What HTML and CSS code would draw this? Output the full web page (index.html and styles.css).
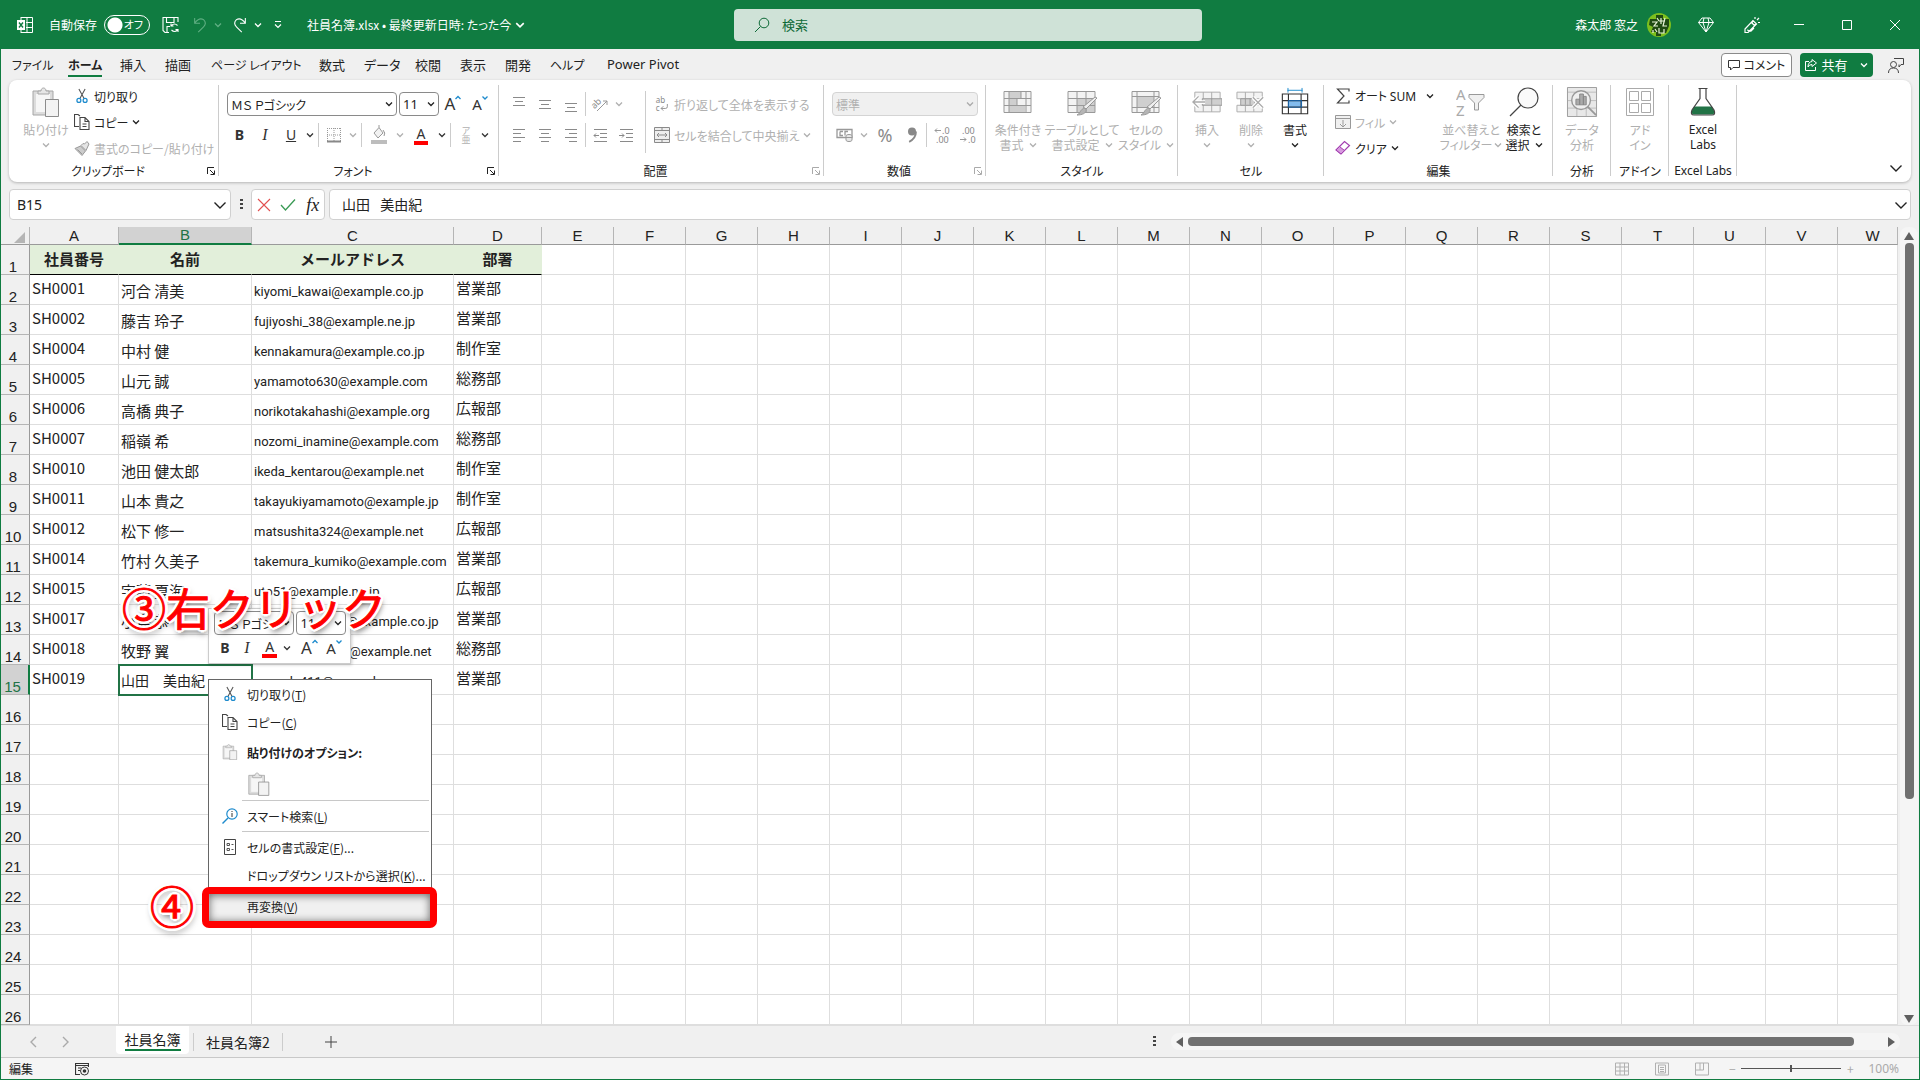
FILE: index.html
```html
<!DOCTYPE html>
<html lang="ja">
<head>
<meta charset="utf-8">
<title>社員名簿.xlsx</title>
<link rel="stylesheet" href="styles.css">
</head>
<body>
<svg class="sprite" aria-hidden="true">
  <symbol id="chev" viewBox="0 0 8 8"><path d="M1 2.500 4 5.500 7 2.500" fill="none" stroke="currentColor" stroke-width="1.300"/></symbol>
  <symbol id="chev-l" viewBox="0 0 14 14"><path d="M1.500 4.500 7 10l5.500-5.500" fill="none" stroke="currentColor" stroke-width="1.400"/></symbol>
  <symbol id="mark-up" viewBox="0 0 6 6"><path d="M.5 4 3 1.500 5.500 4" fill="none" stroke="#1e8bcd" stroke-width="1.300"/></symbol>
  <symbol id="mark-down" viewBox="0 0 6 6"><path d="M.5 1.500 3 4l2.500-2.500" fill="none" stroke="#1e8bcd" stroke-width="1.300"/></symbol>
  <symbol id="launch" viewBox="0 0 8 8"><path d="M.5 7V.5H7M3 3l4 4M7.500 3.500v4h-4" fill="none" stroke="currentColor"/></symbol>
  <symbol id="scissors" viewBox="0 0 16 18"><path d="M4.500 1 10.500 12M11.500 1 5.500 12" fill="none" stroke="#555" stroke-width="1.200"/><circle cx="4.500" cy="14" r="2.200" fill="none" stroke="#1e8bcd" stroke-width="1.400"/><circle cx="11.500" cy="14" r="2.200" fill="none" stroke="#1e8bcd" stroke-width="1.400"/></symbol>
  <symbol id="copy" viewBox="0 0 16 16"><path d="M5 12.500H.5v-12H4l2 1.500M6 3.500h5l4 4v8H6zM11 3.500v4h4M8.500 10h4M8.500 12.500h4" fill="none" stroke="#444" stroke-width="1.100"/></symbol>
  <symbol id="brush" viewBox="0 0 16 16"><path d="M1 8.500 6.500 6l5 5L8 15.500z" fill="#ccc" stroke="#999"/><path d="M3.500 9.500 8 14M7 5.500 12 10.500 15 4 13 1.500 10.500 4 9 3.500z" fill="#e5e5e5" stroke="#999"/></symbol>
  <symbol id="paste" viewBox="0 0 28 30"><path d="M1 4h20v24H1z" fill="#dcdcdc" stroke="#a6a6a6"/><path d="M4 7h14v18H4z" fill="#f6f6f6"/><path d="M6 7V4h3c0-4 5-4 5 0h3v3z" fill="#e6e6e6" stroke="#a6a6a6"/><path d="M13.500 12.500h13v17h-13z" fill="#f3f3f3" stroke="#8c8c8c"/></symbol>
  <symbol id="al-l" viewBox="0 0 14 16"><path d="M1 2.500h12M1 6.500h8M1 10.500h12M1 14.500h8" stroke="#8a8a8a"/></symbol>
  <symbol id="al-c" viewBox="0 0 14 16"><path d="M1 2.500h12M3 6.500h8M1 10.500h12M3 14.500h8" stroke="#8a8a8a"/></symbol>
  <symbol id="al-r" viewBox="0 0 14 16"><path d="M1 2.500h12M5 6.500h8M1 10.500h12M5 14.500h8" stroke="#8a8a8a"/></symbol>
  <symbol id="al-t" viewBox="0 0 14 16"><path d="M1 1.500h12M3 5.500h8M1 9.500h12" stroke="#8a8a8a"/></symbol>
  <symbol id="al-m" viewBox="0 0 14 16"><path d="M1 4.500h12M3 8.500h8M1 12.500h12" stroke="#8a8a8a"/></symbol>
  <symbol id="al-b" viewBox="0 0 14 16"><path d="M1 7.500h12M3 11.500h8M1 15.500h12" stroke="#8a8a8a"/></symbol>
  <symbol id="ind-l" viewBox="0 0 14 16"><path d="M1 2.500h13M7 6.500h7M7 10.500h7M1 14.500h13M6 8.500H1M3 6.500l-2 2 2 2" fill="none" stroke="#8a8a8a"/></symbol>
  <symbol id="ind-r" viewBox="0 0 14 16"><path d="M1 2.500h13M7 6.500h7M7 10.500h7M1 14.500h13M0 8.500h5M3 6.500l2 2-2 2" fill="none" stroke="#8a8a8a"/></symbol>
  <symbol id="merge" viewBox="0 0 16 16"><path d="M.5.500h15v15H.5zM.5 3.500h15M.5 12.500h15M8 .5v3M8 12.500v3M3 8h10M5 6 3 8l2 2M11 6l2 2-2 2" fill="#eee" stroke="#8a8a8a"/></symbol>
  <symbol id="border" viewBox="0 0 16 16"><path d="M1 1.500h14M1 8h14M1.500 1v13M8 1v13M14.500 1v13" stroke="#999" stroke-dasharray="1 1"/><path d="M1 14.500h14" stroke="#888" stroke-width="2"/></symbol>
  <symbol id="fill" viewBox="0 0 16 20"><path d="M3 8 8 2.500 12 8l-5 5zM8 2.500V0M12 5q3 3 1 6" fill="#f2f2f2" stroke="#999"/><path d="M0 15h16v4H0z" fill="#bdbdbd"/></symbol>
  <symbol id="acc" viewBox="0 0 18 14"><path d="M1 1.500h15v8H1zM4 3.500h3M4 3.500v4h3M9 7.500v-4h3" fill="none" stroke="#999" stroke-width="1.300"/><path d="M10 8c0-2 6-2 6 0v4c0 2-6 2-6 0zM10 9.500h6" fill="#e8e8e8" stroke="#999"/></symbol>
  <symbol id="comma" viewBox="0 0 10 14"><circle cx="5" cy="4" r="3.500" fill="#888"/><path d="M8.500 4q0 6-6 9" fill="none" stroke="#888" stroke-width="1.600"/></symbol>
  <symbol id="cond" viewBox="0 0 30 28"><path d="M1 3.500h27v21H1z" fill="#f3f3f3"/><path d="M6 4h12v6H6zM6 11h8v6H6zM6 18h16v6H6z" fill="#cfcfcf"/><path d="M1 3.500h27v21H1zM6 3.500v21M23 3.500v21M1 10.500h27M1 17.500h27M18 4v6M14 11v6" fill="none" stroke="#999"/></symbol>
  <symbol id="tblfmt" viewBox="0 0 30 28"><path d="M1 3.500h27v21H1z" fill="#f3f3f3"/><path d="M10 10.500h18v14H10z" fill="#cfcfcf"/><path d="M1 3.500h27v21H1zM10 3.500v21M19 3.500v21M1 10.500h27M1 17.500h27" fill="none" stroke="#999"/><path d="M30 10 19 21l-3-2L28 9z" fill="#eee" stroke="#999"/><path d="M18 20c3 3 0 7-8 7 4-2 3-6 8-7z" fill="#b5b5b5" stroke="#999"/></symbol>
  <symbol id="cellsty" viewBox="0 0 30 28"><path d="M1 3.500h27v21H1z" fill="#f3f3f3"/><path d="M6 8.500h17v11H6z" fill="#cfcfcf"/><path d="M1 3.500h27v21H1zM6 3.500v21M23 3.500v21M1 8.500h27M1 19.500h27" fill="none" stroke="#999"/><path d="M30 10 19 21l-3-2L28 9z" fill="#eee" stroke="#999"/><path d="M18 20c3 3 0 7-8 7 4-2 3-6 8-7z" fill="#b5b5b5" stroke="#999"/></symbol>
  <symbol id="ins" viewBox="0 0 32 28"><path d="M3 3.500h27v21H3zM12 3.500v21M21 3.500v21" fill="#f3f3f3" stroke="#aaa"/><path d="M11 10.500h21v7H11zM21 10v7" fill="#cfcfcf" stroke="#999"/><path d="M14 14H1M7 8l-6 6 6 6" fill="none" stroke="#fff" stroke-width="4"/><path d="M14 14H1M7 8l-6 6 6 6" fill="none" stroke="#aaa" stroke-width="1.500"/></symbol>
  <symbol id="del" viewBox="0 0 32 28"><path d="M1 3.500h27v7H1zM1 17.500h27v7H1zM10 3.500v7M19 3.500v7M10 17.500v7M19 17.500v7" fill="#f3f3f3" stroke="#aaa"/><path d="M5 10.500h15v7H5zM10 10v7M15 10v7" fill="#cfcfcf" stroke="#999"/><path d="m18 9 11 11M29 9 18 20" stroke="#fff" stroke-width="4"/><path d="m18 9 11 11M29 9 18 20" stroke="#aaa" stroke-width="1.500"/></symbol>
  <symbol id="fmt" viewBox="0 0 30 32"><path d="M1.500 7.500h27v21h-27z" fill="#fff"/><path d="M8 14h14v7H8z" fill="#83bcee"/><path d="M1.500 7.500h27v21h-27zM8 7.500v21M21.500 7.500v21M1 14.500h27M1 21.500h27" fill="none" stroke="#333" stroke-width="1.200"/><path d="M8 14.500h14v7H8z" fill="none" stroke="#1565b0"/><path d="M7.500 1v5M22.500 1v5M7 3.500h16" stroke="#1e8bcd"/></symbol>
  <symbol id="sum" viewBox="0 0 14 16"><path d="M13 3.500V1H1.500L8 8l-6.500 7H13v-2.500" fill="none" stroke="#444" stroke-width="1.200"/></symbol>
  <symbol id="down" viewBox="0 0 16 16"><path d="M.5 1.500h15v13H.5zM.5 4.500h15M8 6v7M5 10l3 3 3-3" fill="#f0f0f0" stroke="#999"/></symbol>
  <symbol id="eraser" viewBox="0 0 16 16"><path d="M1 10 9.500 1.500l5 4L6 14z" fill="#fff" stroke="#a33fb0" stroke-width="1.200"/><path d="M1 10 4.500 6.500 9.500 10.500 6 14z" fill="#d79ade" stroke="#a33fb0"/></symbol>
  <symbol id="find" viewBox="0 0 30 30"><circle cx="19" cy="11" r="10" fill="#fafafa" stroke="#444" stroke-width="1.200"/><path d="M12 18 1 29" stroke="#444" stroke-width="1.300"/></symbol>
  <symbol id="anal" viewBox="0 0 32 32"><path d="M.5.500h31v31H.5z" fill="#e8e8e8" stroke="#999"/><path d="M1 5.500h30M1 14.500h30M1 22.500h30M10.500 23v8M20.500 23v8" stroke="#bbb"/><circle cx="15" cy="14" r="10" fill="#eee" stroke="#999" stroke-width="1.500"/><path d="M9.500 13h4v6h-4zM13.500 7.500h4V19h-4zM17.500 10h3v9h-3z" fill="#aaa" stroke="#888"/><path d="m22 21 9 9" stroke="#999" stroke-width="2"/></symbol>
  <symbol id="addin" viewBox="0 0 28 28"><path d="M.5.500h27v27H.5zM3.500 3.500h9v9h-9zM15.500 3.500h9v9h-9zM3.500 15.500h9v9h-9zM15.500 15.500h9v9h-9z" fill="#fff" stroke="#aaa"/></symbol>
  <symbol id="flask" viewBox="0 0 26 30"><path d="M10 1.500v10L3 22q-3 6 1 6h18q4 0 1-6l-7-10.500v-10z" fill="#fff"/><path d="M4 19.500h18l2 4q1 4-2 4H4q-3 0-2-4z" fill="#217346"/><path d="M8.500 1.500h9M10 1.500v10L2 23q-2 5 2 5h18q4 0 2-5l-8-11.500v-10" fill="none" stroke="#444" stroke-width="1.200"/></symbol>
  <symbol id="lens" viewBox="0 0 16 16"><circle cx="10" cy="6" r="4.800" fill="none" stroke="currentColor"/><path d="M6.500 9.500 1 15" stroke="currentColor"/></symbol>
  <symbol id="info-lens" viewBox="0 0 16 16"><circle cx="10" cy="6" r="5.200" fill="none" stroke="#1e8bcd" stroke-width="1.200"/><path d="M6 10 .5 15.500" stroke="#1e8bcd" stroke-width="1.400"/><path d="M10 5v4M10 3v1" stroke="#333"/></symbol>
  <symbol id="cellfmt" viewBox="0 0 16 16"><path d="M2.500.500h11v15h-11z" fill="#fff" stroke="#444"/><path d="M5 4.500h2.500v2H5zM5 9.500h2.500v2H5zM9.500 5.500h2M9.500 10.500h2" fill="none" stroke="#555"/></symbol>
</svg>

<div class="app">
  <header class="titlebar">
    <div class="tb-left">
      <svg class="i16 xl" viewBox="0 0 16 16"><path d="M4 .5h11.500v15H4M4 3V0M4 16v-3M10 .5v15M9 5.500h6.500M9 10.500h6.500" fill="none" stroke="#fff"/><path d="M0 3h8v10H0z" fill="#fff"/><path d="m2 5.500 4 5M6 5.500l-4 5" stroke="#107c41" stroke-width="1.400"/></svg>
      <label class="autosave"><span>自動保存</span><input type="checkbox" class="switch"><span class="switch-txt">オフ</span></label>
      <button class="qb q-save" aria-label="保存"><svg class="i18" viewBox="0 0 18 18"><path d="M7 16.500H3l-2-2v-13h15V6M4.500 1.500v5H12v-5M5 16.500v-6h3M15.500 9.500q-3-3-6 0M9 7.500v2.500h2.500M9.500 14q3 3 6 0M16 16v-2.500h-2.500" fill="none" stroke="#fff" stroke-width="1.100"/></svg></button>
      <button class="qb q-undo dim" aria-label="元に戻す"><svg class="i16" viewBox="0 0 16 18"><path d="M2 1v6h6M2 7q5-7 10-4 4 4 0 8l-6 6" fill="none" stroke="currentColor" stroke-width="1.200"/></svg><svg class="i8"><use href="#chev"/></svg></button>
      <button class="qb q-redo" aria-label="やり直し"><svg class="i16" viewBox="0 0 16 18"><path d="M14 1v6H8M14 7Q9 0 4 3q-4 4 0 8l6 6" fill="none" stroke="currentColor" stroke-width="1.200"/></svg><svg class="i8"><use href="#chev"/></svg></button>
      <button class="qb q-more" aria-label="カスタマイズ"><svg class="i8" viewBox="0 0 8 8"><path d="M1 .5h6M1 3.500l3 3 3-3" fill="none" stroke="#fff" stroke-width="1.200"/></svg></button>
      <button class="doc-name">社員名簿.xlsx • 最終更新日時: たった今<svg class="i10"><use href="#chev"/></svg></button>
    </div>
    <label class="search"><svg class="i16"><use href="#lens"/></svg><input type="text" placeholder="検索" aria-label="検索"></label>
    <div class="tb-right">
      <span class="user">森太郎 窓之</span>
      <svg class="avatar" viewBox="0 0 24 24"><circle cx="12" cy="12" r="12" fill="#7cbf1e"/><path d="M3 6h6V2h7v4h6v7l-3 7h-5v3H9v-4H4l2-5-4-2z" fill="#1f4a12"/><path d="M5 9h5l-3 4h4M10 5l2 3M14 5v6M12 8h6M18 5l-2 8h4M8 16l2 3M12 15v5h5v-4M6 20v-3" fill="none" stroke="#e8f3d8" stroke-width="1.200"/></svg>
      <svg class="i16" viewBox="0 0 16 16"><path d="M4 1h8l3.500 4.500L8 15 .5 5.500zM.5 5.500h15M5 5.500 8 15l3-9.500M5 5.500 6 1M11 5.500 10 1" fill="none" stroke="#fff"/></svg>
      <svg class="i16" viewBox="0 0 16 16"><path d="M1 12 9 3.500l3.500 3.500L4 15.500H1zM9 3.500 8 6l2 2 2.500-1M3 13l4 1 3-3M11 2V0M13 3l2-2M14 5.500h2" fill="none" stroke="#fff" stroke-width="1.200"/></svg>
      <button class="win" aria-label="最小化"><svg viewBox="0 0 10 10"><path d="M0 4.500h10" stroke="#fff"/></svg></button>
      <button class="win" aria-label="最大化"><svg viewBox="0 0 10 10"><path d="M.5.500h9v9h-9z" fill="none" stroke="#fff"/></svg></button>
      <button class="win" aria-label="閉じる"><svg viewBox="0 0 10 10"><path d="m0 0 10 10M10 0 0 10" stroke="#fff"/></svg></button>
    </div>
  </header>

  <nav class="tabs">
    <div class="tablist">
      <button>ファイル</button><button class="on">ホーム</button><button>挿入</button><button>描画</button><button>ページ レイアウト</button><button>数式</button><button>データ</button><button>校閲</button><button>表示</button><button>開発</button><button>ヘルプ</button><button class="lat">Power Pivot</button>
    </div>
    <div class="tabs-right">
      <button class="comment"><svg class="i12" viewBox="0 0 12 12"><path d="M.5 1.500h11v7H5L2.500 11V8.500h-2z" fill="none" stroke="#333"/></svg>コメント</button>
      <button class="share"><svg class="i12" viewBox="0 0 12 12"><path d="M4 2.500H.5v9h10V8M7 .5l4.500 3.500L7 7.500V5.500Q4 5.500 3 8q0-5 4-5.500z" fill="none" stroke="#fff"/></svg>共有<svg class="i8"><use href="#chev"/></svg></button>
      <svg class="i16" viewBox="0 0 16 16"><path d="M6 1.500h9.500v6H13L11 10V7.500" fill="none" stroke="#444"/><circle cx="5.500" cy="7.500" r="3" fill="none" stroke="#444"/><path d="M.5 16q0-5 5-5t5 5" fill="none" stroke="#444"/></svg>
    </div>
  </nav>

  <section class="ribbon">
    <div class="group g-clip">
      <div class="gbody">
        <button class="big dim w-paste"><svg class="i28"><use href="#paste"/></svg><span>貼り付け</span><svg class="i8"><use href="#chev"/></svg></button>
        <div class="rows3">
          <button class="small"><svg class="i16"><use href="#scissors"/></svg>切り取り</button>
          <button class="small"><svg class="i16"><use href="#copy"/></svg>コピー<svg class="i8"><use href="#chev"/></svg></button>
          <button class="small dim"><svg class="i16"><use href="#brush"/></svg>書式のコピー/貼り付け</button>
        </div>
      </div>
      <div class="gfoot"><span>クリップボード</span><svg class="i8"><use href="#launch"/></svg></div>
    </div>
    <div class="group g-font">
      <div class="gbody rows2">
        <div class="row">
          <span class="combo c-font"><select aria-label="フォント名"><option>ＭＳ Ｐゴシック</option></select><svg class="i8"><use href="#chev"/></svg></span>
          <span class="combo c-size"><select aria-label="サイズ"><option>11</option></select><svg class="i8"><use href="#chev"/></svg></span>
          <button class="tool t-grow">A<svg class="mark"><use href="#mark-up"/></svg></button><button class="tool t-shrink">A<svg class="mark"><use href="#mark-down"/></svg></button>
        </div>
        <div class="row">
          <button class="tool w26"><b>B</b></button><button class="tool w26"><i class="it">I</i></button><button class="tool w26"><u>U</u></button><button class="tool w12"><svg class="i8"><use href="#chev"/></svg></button>
          <span class="vsep"></span>
          <button class="tool w26 dim"><svg class="i16"><use href="#border"/></svg></button><button class="tool w12 dim"><svg class="i8"><use href="#chev"/></svg></button>
          <span class="vsep"></span>
          <button class="tool w30 dim"><svg class="i16x20"><use href="#fill"/></svg></button><button class="tool w12 dim"><svg class="i8"><use href="#chev"/></svg></button>
          <button class="tool w30"><span class="fcolor">A</span></button><button class="tool w12"><svg class="i8"><use href="#chev"/></svg></button>
          <span class="vsep"></span>
          <button class="tool w26 dim ruby"><span>ア</span><span>亜</span></button><button class="tool w12"><svg class="i8"><use href="#chev"/></svg></button>
        </div>
      </div>
      <div class="gfoot"><span>フォント</span><svg class="i8"><use href="#launch"/></svg></div>
    </div>
    <div class="group g-align">
      <div class="gbody acols">
        <div class="rows2">
          <div class="row">
            <button class="tool w26"><svg class="i14"><use href="#al-t"/></svg></button><button class="tool w26"><svg class="i14"><use href="#al-m"/></svg></button><button class="tool w26"><svg class="i14"><use href="#al-b"/></svg></button><span class="vsep"></span><button class="tool w26 dim"><svg class="i18" viewBox="0 0 18 18"><g transform="rotate(-45 7 8)"><text x="0" y="10" class="glyph">ab</text></g><path d="M6 16 16 6M12 6h4v4" fill="none" stroke="#999"/></svg></button><button class="tool w12 dim"><svg class="i8"><use href="#chev"/></svg></button>
          </div>
          <div class="row">
            <button class="tool w26"><svg class="i14"><use href="#al-l"/></svg></button><button class="tool w26"><svg class="i14"><use href="#al-c"/></svg></button><button class="tool w26"><svg class="i14"><use href="#al-r"/></svg></button><span class="vsep"></span><button class="tool w26"><svg class="i14"><use href="#ind-l"/></svg></button><button class="tool w26"><svg class="i14"><use href="#ind-r"/></svg></button>
          </div>
        </div>
        <div class="rows2 wrapcol">
          <button class="small dim"><svg class="i16" viewBox="0 0 16 18"><text x="1" y="8" class="glyph">ab</text><text x="1" y="17" class="glyph">c</text><path d="M14 9v3q0 2-2 2H7M9.500 11.500 7 14l2.500 2.500" fill="none" stroke="#8a8a8a"/></svg>折り返して全体を表示する</button>
          <button class="small dim"><svg class="i16"><use href="#merge"/></svg>セルを結合して中央揃え<svg class="i8"><use href="#chev"/></svg></button>
        </div>
      </div>
      <div class="gfoot dimicon"><span>配置</span><svg class="i8"><use href="#launch"/></svg></div>
    </div>
    <div class="group g-num">
      <div class="gbody rows2">
        <div class="row"><span class="combo c-num"><select aria-label="表示形式" disabled><option>標準</option></select><svg class="i8"><use href="#chev"/></svg></span></div>
        <div class="row">
          <button class="tool w26"><svg class="i18"><use href="#acc"/></svg></button><button class="tool w12 dim"><svg class="i8"><use href="#chev"/></svg></button>
          <button class="tool w30 pct">%</button><button class="tool w22"><svg class="i14"><use href="#comma"/></svg></button><span class="vsep"></span>
          <button class="tool w26"><svg class="i18" viewBox="0 0 18 18"><path d="M2 4.500h6M4 2.500l-2 2 2 2" fill="none" stroke="#999"/><text x="9" y="8" class="glyph">.0</text><text x="3" y="17" class="glyph">.00</text></svg></button><button class="tool w26"><svg class="i18" viewBox="0 0 18 18"><path d="M1 13.500h6M5 11.500l2 2-2 2" fill="none" stroke="#999"/><text x="3" y="8" class="glyph">.00</text><text x="9" y="17" class="glyph">.0</text></svg></button>
        </div>
      </div>
      <div class="gfoot dimicon"><span>数値</span><svg class="i8"><use href="#launch"/></svg></div>
    </div>
    <div class="group g-style">
      <div class="gbody">
        <button class="big dim w-58"><svg class="i30"><use href="#cond"/></svg><span>条件付き</span><span>書式<svg class="i8"><use href="#chev"/></svg></span></button>
        <button class="big dim w-68"><svg class="i30"><use href="#tblfmt"/></svg><span>テーブルとして</span><span>書式設定<svg class="i8"><use href="#chev"/></svg></span></button>
        <button class="big dim w-58"><svg class="i30"><use href="#cellsty"/></svg><span>セルの</span><span>スタイル<svg class="i8"><use href="#chev"/></svg></span></button>
      </div>
      <div class="gfoot plain"><span>スタイル</span></div>
    </div>
    <div class="group g-cell">
      <div class="gbody">
        <button class="big dim w-44"><svg class="i30"><use href="#ins"/></svg><span>挿入</span><svg class="i8"><use href="#chev"/></svg></button>
        <button class="big dim w-44"><svg class="i30"><use href="#del"/></svg><span>削除</span><svg class="i8"><use href="#chev"/></svg></button>
        <button class="big w-44"><svg class="i30"><use href="#fmt"/></svg><span>書式</span><svg class="i8"><use href="#chev"/></svg></button>
      </div>
      <div class="gfoot plain"><span>セル</span></div>
    </div>
    <div class="group g-edit">
      <div class="gbody">
        <div class="rows3 e3">
          <button class="small"><svg class="i16"><use href="#sum"/></svg><span>オート <span class="lat">SUM</span></span><svg class="i8 near"><use href="#chev"/></svg></button>
          <button class="small dim"><svg class="i16"><use href="#down"/></svg>フィル<svg class="i8"><use href="#chev"/></svg></button>
          <button class="small"><svg class="i16"><use href="#eraser"/></svg>クリア<svg class="i8"><use href="#chev"/></svg></button>
        </div>
        <button class="big dim w-58"><svg class="i30" viewBox="0 0 30 30"><text x="0" y="13" class="az">A</text><text x="0" y="29" class="az">Z</text><path d="M13 7.500h15v3l-5.500 5.500v7h-4v-7L13 10.500z" fill="#f0f0f0" stroke="#999"/></svg><span>並べ替えと</span><span class="tight">フィルター<svg class="i8"><use href="#chev"/></svg></span></button>
        <button class="big w-50"><svg class="i30"><use href="#find"/></svg><span>検索と</span><span>選択<svg class="i8"><use href="#chev"/></svg></span></button>
      </div>
      <div class="gfoot plain"><span>編集</span></div>
    </div>
    <div class="group g-58">
      <div class="gbody"><button class="big dim"><svg class="i32"><use href="#anal"/></svg><span>データ</span><span>分析</span></button></div>
      <div class="gfoot plain"><span>分析</span></div>
    </div>
    <div class="group g-58">
      <div class="gbody"><button class="big dim"><svg class="i28"><use href="#addin"/></svg><span>アド</span><span>イン</span></button></div>
      <div class="gfoot plain"><span>アドイン</span></div>
    </div>
    <div class="group g-68">
      <div class="gbody"><button class="big lat"><svg class="i28"><use href="#flask"/></svg><span>Excel</span><span>Labs</span></button></div>
      <div class="gfoot plain lat"><span>Excel Labs</span></div>
    </div>
    <button class="collapse" aria-label="リボンを折りたたむ"><svg class="i14"><use href="#chev-l"/></svg></button>
  </section>

  <section class="formula">
    <label class="namebox"><input type="text" value="B15" aria-label="名前ボックス"><svg class="i14"><use href="#chev-l"/></svg></label>
    <span class="dots" aria-hidden="true"></span>
    <div class="fx">
      <button aria-label="キャンセル"><svg class="i14" viewBox="0 0 14 14"><path d="m1 1 12 12M13 1 1 13" stroke="#e25050" stroke-width="1.100"/></svg></button>
      <button aria-label="入力"><svg class="i16" viewBox="0 0 16 14"><path d="m1 7 4.500 5L15 1.500" fill="none" stroke="#3a9a55" stroke-width="1.300"/></svg></button>
      <button class="fxb">fx</button>
    </div>
    <label class="fbar"><input type="text" value="山田&#8194; 美由紀" aria-label="数式バー"><svg class="i14"><use href="#chev-l"/></svg></label>
  </section>

  <main class="sheet">
    <table class="grid" id="grid">
      <colgroup id="cols"><col class="k-h"><col class="k-a"><col class="k-b"><col class="k-c"><col class="k-d"></colgroup>
      <thead><tr id="letters"><th class="corner"><svg viewBox="0 0 10 10"><path d="M10 0v10H0z" fill="#b5b5b5"/></svg></th></tr></thead>
      <tbody id="rows"></tbody>
    </table>
    <div class="vscroll"><span class="ar up"></span><span class="thumb"></span><span class="ar down"></span></div>
  </main>

  <footer class="sheetbar">
    <div class="nav"><button aria-label="前へ"><svg viewBox="0 0 8 12"><path d="M7 1 2 6l5 5" fill="none" stroke="#aaa" stroke-width="1.400"/></svg></button><button aria-label="次へ"><svg viewBox="0 0 8 12"><path d="m1 1 5 5-5 5" fill="none" stroke="#aaa" stroke-width="1.400"/></svg></button></div>
    <button class="st on"><span>社員名簿</span></button>
    <button class="st"><span>社員名簿2</span></button>
    <button class="add" aria-label="新しいシート"><svg viewBox="0 0 12 12"><path d="M6 0v12M0 6h12" stroke="#444"/></svg></button>
    <span class="dots" aria-hidden="true"></span>
    <div class="hscroll"><span class="ar left"></span><span class="thumb"></span><span class="ar right"></span></div>
  </footer>
  <footer class="status">
    <span class="mode">編集</span>
    <svg class="i14" viewBox="0 0 14 14"><path d="M5 12.500H.5v-11h13V5M.5 3.500h13M3 6h3M3 8.500h2" fill="none" stroke="#333" stroke-width="1.200"/><circle cx="9.500" cy="9" r="4" fill="#f5f5f5" stroke="#333"/><circle cx="9.500" cy="9" r="1.800" fill="#333"/></svg>
    <div class="views">
      <svg class="i14" viewBox="0 0 14 14"><path d="M.5 1h13v12H.5zM.5 5h13M.5 9h13M5 1v12M9.500 1v12" fill="none" stroke="#b0b0b0"/></svg>
      <svg class="i14" viewBox="0 0 14 14"><path d="M.5 1h13v12H.5zM3.500 3h7v8h-7zM5 5.500h4M5 7.500h4M5 9.500h4" fill="none" stroke="#b0b0b0"/></svg>
      <svg class="i14" viewBox="0 0 14 14"><path d="M.5 1h13v12H.5zM.5 8h8V1M5 1v7" fill="none" stroke="#b0b0b0"/></svg>
    </div>
    <span class="pm">−</span><input type="range" class="zoom" aria-label="ズーム" min="0" max="200" value="100" disabled><span class="pm">+</span><span class="pc">100%</span>
  </footer>

  <div class="mini">
    <div class="row">
      <span class="combo m-font"><select aria-label="フォント"><option>ＭＳ Ｐゴシ</option></select><svg class="i8"><use href="#chev"/></svg></span>
      <span class="combo m-size"><select aria-label="フォントサイズ"><option>11</option></select><svg class="i8"><use href="#chev"/></svg></span>
    </div>
    <div class="row">
      <button class="tool w22"><b>B</b></button><button class="tool w22"><i class="it">I</i></button><button class="tool w26"><span class="fcolor">A</span></button><button class="tool w12"><svg class="i8"><use href="#chev"/></svg></button><button class="tool t-grow">A<svg class="mark"><use href="#mark-up"/></svg></button><button class="tool t-shrink">A<svg class="mark"><use href="#mark-down"/></svg></button>
    </div>
  </div>

  <div class="menu" role="menu">
    <button role="menuitem"><svg class="i16"><use href="#scissors"/></svg><span>切り取り(<u>T</u>)</span></button>
    <button role="menuitem"><svg class="i16"><use href="#copy"/></svg><span>コピー(<u>C</u>)</span></button>
    <div class="mhead"><svg class="i16"><use href="#paste"/></svg><b>貼り付けのオプション:</b></div>
    <button role="menuitem" class="popt" aria-label="貼り付け"><svg class="i22"><use href="#paste"/></svg></button>
    <hr>
    <button role="menuitem"><svg class="i16"><use href="#info-lens"/></svg><span>スマート検索(<u>L</u>)</span></button>
    <hr>
    <button role="menuitem"><svg class="i16"><use href="#cellfmt"/></svg><span>セルの書式設定(<u>F</u>)...</span></button>
    <button role="menuitem"><span class="noicon">ドロップダウン リストから選択(<u>K</u>)...</span></button>
    <button role="menuitem" class="last"><span class="noicon">再変換(<u>V</u>)</span></button>
  </div>

  <div class="frame"></div>
  <div class="note n3">③右クリック</div>
  <div class="note n4">④</div>
</div>
<script src="sheet.js"></script>
</body>
</html>
```
FILE: styles.css
```css
* { box-sizing: border-box; }
body {
  margin: 0;
  font-family: "Noto Sans CJK JP", "Noto Sans", sans-serif;
  font-size: 12px;
  line-height: 15px;
  color: #222;
  font-feature-settings: "palt";
}
button, input, select { font: inherit; font-feature-settings: inherit; color: inherit; margin: 0; }
button { background: none; border: 0; padding: 0; white-space: nowrap; }
svg { flex: none; display: block; }
.sprite { position: absolute; width: 0; height: 0; }
.lat { font-family: "Noto Sans", sans-serif; }
.glyph { font: 9px "Noto Sans", sans-serif; fill: #888; }
.az { font: 15px "Noto Sans", sans-serif; fill: #aaa; }
.i8 { width: 8px; height: 8px; }
.i10 { width: 10px; height: 10px; }
.i12 { width: 12px; height: 12px; }
.i14 { width: 14px; height: 16px; }
.i16 { width: 16px; height: 16px; }
.i16x20 { width: 16px; height: 20px; }
.i18 { width: 18px; height: 18px; overflow: visible; }
.i22 { width: 22px; height: 24px; }
.i28 { width: 28px; height: 30px; }
.i30 { width: 30px; height: 30px; }
.i32 { width: 32px; height: 32px; }
.row { display: flex; align-items: center; }
.dim { color: #b0b0b0; }

.app {
  position: relative;
  display: flex;
  flex-direction: column;
  min-height: 100vh;
  background: #f0f0f0;
  border: solid #107c41;
  border-width: 0 1px 1px;
  overflow: hidden;
}

/* title bar */
.titlebar {
  display: grid;
  grid-template-columns: minmax(0, 1fr) 468px minmax(0, 1fr);
  gap: 0 16px;
  height: 49px;
  padding-left: 16px;
  background: #107c41;
  color: #fff;
  align-items: center;
}
.tb-left { display: flex; align-items: center; }
.xl { margin-right: 16px; }
.autosave { display: flex; align-items: center; position: relative; }
.switch {
  appearance: none;
  width: 46px;
  height: 20px;
  margin: 0 0 0 7px;
  border: 1px solid #fff;
  border-radius: 10px;
  background: radial-gradient(circle at 10px 9px, #fff 7px, transparent 8px);
}
.switch-txt { position: absolute; right: 7px; top: 2px; line-height: 15px; font-size: 11px; }
.qb { display: flex; align-items: center; gap: 8px; }
.q-save { margin-left: 12px; }
.q-undo { margin-left: 12px; color: #5fae82; gap: 6px; }
.q-redo { margin-left: 10px; gap: 6px; }
.q-more { margin-left: 12px; }
.doc-name { display: flex; align-items: center; gap: 4px; margin-left: 25px; }
.search {
  display: flex;
  align-items: center;
  gap: 12px;
  height: 32px;
  padding-left: 20px;
  border-radius: 4px;
  background: #cfe2d7;
  color: #0e6a37;
}
.search input { flex: 1; border: 0; background: none; padding: 0; outline: 0; font-size: 13px; }
.search input::placeholder { color: #0e6a37; }
.tb-right { display: flex; align-items: center; justify-content: flex-end; padding-right: 19px; gap: 38px; }
.user { margin-right: -29px; }
.avatar { width: 24px; height: 24px; margin-right: -11px; }
.tb-right .i16 { margin-right: -8px; }
.win svg { width: 10px; height: 10px; }
.tb-right .i16 + .win { margin-left: 4px; }

/* tabs */
.tabs { display: flex; justify-content: space-between; height: 31px; padding: 0 15px 0 11px; }
.tablist { display: grid; grid-template-columns: 56px 52px 45px 46px 108px 45px 51px 45px 45px 45px 57px 80px; }
.tablist button { justify-self: start; height: 28px; padding-top: 4px; font-size: 13px; border-bottom: 2px solid transparent; }
.tablist button:nth-child(1), .tablist button:nth-child(5), .tablist button:nth-child(11) { font-size: 12px; }
.tablist .on { font-weight: 700; font-size: 12px; border-color: #107c41; }
.tabs-right { display: flex; align-items: center; gap: 8px; }
.comment, .share { display: flex; align-items: center; justify-content: center; gap: 4px; height: 24px; border-radius: 4px; }
.comment { width: 71px; border: 1px solid #8a8a8a; background: #fff; font-size: 12px; }
.share { width: 73px; background: #107c41; color: #fff; font-size: 13px; }
.share .i8 { margin-left: 8px; }
.tabs-right > .i16 { margin-left: 7px; }

/* ribbon */
.ribbon {
  display: flex;
  height: 102px;
  margin: 0 8px 7px;
  padding-top: 3px;
  background: #fff;
  border-radius: 8px;
  box-shadow: 0 1px 3px rgba(0, 0, 0, .25);
}
.group { display: flex; flex-direction: column; flex: none; background: linear-gradient(#ccc, #ccc) right 2px / 1px 91px no-repeat; }
.gbody { display: flex; height: 79px; }
.g-clip { width: 210px; }
.g-font { width: 280px; }
.g-align { width: 325px; }
.g-num { width: 162px; }
.g-style { width: 192px; }
.g-cell { width: 146px; }
.g-edit { width: 229px; }
.g-58 { width: 58px; }
.g-68 { width: 68px; }
.gfoot { display: flex; align-items: center; height: 17px; padding-right: 4px; }
.gfoot span { flex: 1; text-align: center; white-space: nowrap; }
.gfoot.plain { padding: 0; }
.dimicon svg { color: #aaa; }
.rows2 { display: grid; grid-template-rows: 32px 30px; align-content: start; padding-top: 5px; }
.rows3 { display: grid; grid-template-rows: 26px 26px 26px; }
.small { display: flex; align-items: center; gap: 4px; }
.small .near { margin-left: 6px; }
.big { display: flex; flex-direction: column; align-items: center; padding-top: 4px; }
.big > svg:first-child { margin-bottom: 5px; height: 30px; }
.big > span { display: flex; align-items: center; gap: 5px; height: 15px; }
.big > .tight { gap: 2px; }
.big > .i8 { margin-top: 4px; }
.gbody > .big:only-child { width: 100%; }
.w-paste { width: 56px; margin: 0 0 0 9px; }
.w-58 { width: 60px; }
.w-68 { width: 68px; }
.w-44 { width: 44px; }
.g-style .gbody { padding-left: 2px; }
.g-cell .gbody { padding-left: 7px; }
.w-50 { width: 46px; }
.e3 { width: 117px; padding-left: 11px; }
.tool { display: flex; align-items: center; justify-content: center; height: 26px; font: 14px/16px "Noto Sans", sans-serif; color: #333; }
.tool.dim { color: #b0b0b0; }
.w12 { width: 12px; }
.w22 { width: 24px; }
.w26 { width: 26px; }
.w30 { width: 30px; }
.it { font-family: "Liberation Serif", serif; font-size: 16px; }
.vsep { width: 1px; height: 24px; background: #ccc; margin: 0 2px; }
.acols .vsep { margin: 0 1px; }
.mark { width: 6px; height: 6px; align-self: flex-start; margin-top: 4px; }
.t-grow { width: 28px; font-size: 17px; }
.t-shrink { width: 26px; font-size: 15px; }
.rows2.gbody { padding-left: 8px; }
.g-font .row + .row .tool:first-child { width: 25px; }
.fcolor { border-bottom: 4px solid #f00; padding: 0 3px; line-height: 15px; }
.ruby { flex-direction: column; font: 9px/9px "Noto Sans CJK JP", sans-serif; }
.combo { display: grid; align-items: center; height: 24px; }
.combo > * { grid-area: 1 / 1; }
.combo svg { justify-self: end; margin-right: 4px; pointer-events: none; }
.combo select { appearance: none; width: 100%; height: 24px; padding: 0 3px; background: #fff; border: 1px solid #8a8a8a; border-radius: 4px; opacity: 1; }
.c-font { width: 170px; margin-right: 2px; }
.c-size { width: 40px; }
.c-size select, .m-size select { font-family: "Noto Sans", sans-serif; font-size: 13px; }
.c-num { width: 146px; }
.c-num select { background: #f0f0f0; border-color: #d4d4d4; color: #b0b0b0; }
.c-num svg { color: #aaa; }
.acols > .rows2 { padding-left: 7px; width: 146px; }
.acols > .wrapcol { width: 178px; padding-left: 9px; background: linear-gradient(#ccc, #ccc) left 8px / 1px 62px no-repeat; }
.pct { font-size: 18px; color: #8a8a8a; }
.collapse { margin: auto 8px 6px auto; }

/* formula bar */
.formula { display: flex; align-items: stretch; height: 31px; margin: 0 8px 7px; }
.namebox, .fx, .fbar { display: flex; align-items: center; background: #fff; border: 1px solid #d0d0d0; border-radius: 4px; }
.namebox { width: 222px; padding: 0 3px 0 7px; }
.formula input { flex: 1; min-width: 0; border: 0; padding: 0; outline: 0; background: none; font-size: 14px; }
.namebox input { font-family: "Noto Sans", sans-serif; }
.dots { width: 3px; align-self: center; height: 11px; margin: 0 8px 0 9px; background: repeating-linear-gradient(#444 0 2px, transparent 2px 4px); }
.fx { width: 74px; justify-content: space-around; margin-right: 4px; }
.fxb { font: italic 18px/20px "Liberation Serif", serif; }
.fbar { flex: 1; padding: 0 2px 0 12px; }

/* worksheet */
.sheet { display: flex; flex: 1; }
.grid { flex: 1; width: 0; table-layout: fixed; border-collapse: separate; border-spacing: 0; background: #fff; font-feature-settings: normal; }
.k-h { width: 29px; }
.k-a { width: 89px; }
.k-b { width: 133px; }
.k-c { width: 202px; }
.k-d { width: 88px; }
.k-n { width: 72px; }
.grid th, .grid td { padding: 0 2px; border: solid #dedede; border-width: 0 1px 1px 0; white-space: nowrap; font-weight: 400; text-align: left; }
.grid thead th {
  height: 18px;
  font: 15px/16px "Liberation Sans", sans-serif;
  text-align: center;
  background: #f0f0f0;
  border-color: #9a9a9a;
  border-right-color: #b5b5b5;
}
.grid thead .sel { background: #d2d2d2; color: #217346; border-bottom: 2px solid #107c41; }
.grid thead th:last-child { padding-left: 12px; }
.grid .corner { padding: 3px 0 0 13px; }
.corner svg { width: 11px; height: 11px; }
.grid tbody tr { height: 30px; }
.grid tbody th { font: 15px/12px "Liberation Sans", sans-serif; vertical-align: bottom; text-align: center; background: #f0f0f0; border-color: #9a9a9a; border-bottom-color: #b5b5b5; padding: 0 4px 1px 0; }
.grid tbody th.sel { background: #d2d2d2; color: #217346; border-right: 2px solid #107c41; }
.grid .c1, .grid .c4 { font-size: 15px; padding-bottom: 4px; }
.grid .c2 { font-size: 15px; padding-top: 1px; }
.grid .c3 { font: 13px/15px Roboto, sans-serif; padding-top: 4px; }
.grid .title { background: #e2efda; border-right-color: #e2efda; border-bottom-color: #000; text-align: center; font-weight: 700; font-size: 15px; padding-bottom: 2px; }
.grid td.edit { outline: 2px solid #217346; outline-offset: -1px; font-size: 14px; }
.vscroll { display: flex; flex-direction: column; align-items: center; width: 18px; margin-left: 2px; margin-right: 1px; border-radius: 8px; background: #f5f5f5; }
.vscroll .thumb { width: 9px; height: 556px; border-radius: 4px; background: #707070; margin-bottom: auto; }
.ar { width: 0; height: 0; border: 5px solid transparent; }
.up { border-width: 0 5px 8px; border-bottom-color: #606060; margin: 5px 0 3px; }
.down { border-width: 8px 5px 0; border-top-color: #606060; margin-bottom: 2px; }
.left { border-width: 5px 7px 5px 0; border-right-color: #606060; margin: 0 5px; }
.right { border-width: 5px 0 5px 7px; border-left-color: #606060; margin-right: 5px; }

/* sheet tabs and status */
.sheetbar { display: flex; align-items: center; height: 32px; border-top: 1px solid #dedede; }
.nav { display: flex; gap: 25px; padding-left: 28px; width: 115px; }
.nav svg, .add svg { width: 8px; height: 12px; }
.st { height: 100%; padding: 0 12px; font-size: 14px; }
.st.on { width: 73px; padding: 0; align-self: flex-start; height: 28px; background: #fff; border-radius: 0 0 4px 4px; margin-right: 4px; }
.st span { display: inline-block; }
.st.on span { line-height: 20px; border-bottom: 2px solid #107c41; }
.st:not(.on) { height: 18px; line-height: 18px; border: solid #ccc; border-width: 0 1px; }
.add { margin: 0 auto 0 42px; }
.add svg { width: 12px; }
.sheetbar .dots { margin-right: 15px; }
.hscroll { display: flex; align-items: center; width: 729px; height: 17px; margin-right: 19px; border-radius: 8px; background: #f5f5f5; }
.hscroll .thumb { width: 666px; height: 9px; border-radius: 4px; background: #707070; margin-right: auto; }
.status { display: flex; align-items: center; height: 22px; padding: 0 20px 0 8px; background: #f5f5f5; border-top: 1px solid #c8c8c8; }
.mode { margin-right: 42px; }
.status .i14 { height: 14px; }
.views { display: flex; gap: 26px; margin: 0 18px 0 auto; }
.pm { width: 10px; text-align: center; color: #aaa; }
.zoom { appearance: none; width: 100px; height: 8px; margin: 0 4px; background: linear-gradient(#555, #555) center / 100% 1px no-repeat; }
.zoom::-webkit-slider-thumb { appearance: none; width: 2px; height: 7px; background: #555; }
.pc { margin-left: 13px; color: #aaa; font-family: "Noto Sans", sans-serif; }

/* floating layers over the sheet */
.mini {
  position: absolute;
  left: 207px;
  top: 608px;
  width: 143px;
  padding: 2px 4px 2px 5px;
  background: #fff;
  border: 1px solid #ccc;
  box-shadow: 1px 1px 3px rgba(0, 0, 0, .2);
}
.mini .t-grow { margin-left: 4px; }
.m-font { width: 81px; margin-right: 2px; }
.m-size { width: 50px; }
.menu {
  position: absolute;
  left: 207px;
  top: 679px;
  width: 224px;
  padding: 0 1px;
  background: #fff;
  border: 1px solid #666;
}
.menu button, .mhead { display: flex; align-items: center; gap: 9px; width: 100%; height: 28px; padding-left: 12px; }
.mhead { height: 32px; }
.noicon { margin-left: 25px; }
.menu button.popt { padding-left: 38px; height: 31px; }
.menu hr { margin: 1px 1px 1px 32px; border: 0; border-top: 1px solid #c8c8c8; }
.menu .last { height: 34px; background: #f0f0f0; }
.frame {
  position: absolute;
  left: 201px;
  top: 887px;
  width: 235px;
  height: 41px;
  border: 7px solid #f00;
  border-radius: 7px;
  box-shadow: inset 0 1px 8px rgba(0, 0, 0, .6);
}
.note {
  position: absolute;
  color: #f00;
  font-size: 44px;
  line-height: 48px;
  white-space: nowrap;
  font-feature-settings: normal;
  -webkit-text-stroke: 1px #f00;
  text-shadow:
    3px 0 #fff, -3px 0 #fff, 0 3px #fff, 0 -3px #fff,
    2px 2px #fff, -2px 2px #fff, 2px -2px #fff, -2px -2px #fff,
    3px 1px #fff, -3px 1px #fff, 3px -1px #fff, -3px -1px #fff,
    1px 4px 6px rgba(0, 0, 0, .8);
}
.n3 { left: 121px; top: 583px; }
.n4 { left: 149px; top: 881px; }
```
FILE: sheet.js
```javascript
const data = [
  ["社員番号", "名前", "メールアドレス", "部署"],
  ["SH0001", "河合 清美", "kiyomi_kawai@example.co.jp", "営業部"],
  ["SH0002", "藤吉 玲子", "fujiyoshi_38@example.ne.jp", "営業部"],
  ["SH0004", "中村 健", "kennakamura@example.co.jp", "制作室"],
  ["SH0005", "山元 誠", "yamamoto630@example.com", "総務部"],
  ["SH0006", "高橋 典子", "norikotakahashi@example.org", "広報部"],
  ["SH0007", "稲嶺 希", "nozomi_inamine@example.com", "総務部"],
  ["SH0010", "池田 健太郎", "ikeda_kentarou@example.net", "制作室"],
  ["SH0011", "山本 貴之", "takayukiyamamoto@example.jp", "制作室"],
  ["SH0012", "松下 修一", "matsushita324@example.net", "広報部"],
  ["SH0014", "竹村 久美子", "takemura_kumiko@example.com", "営業部"],
  ["SH0015", "宇藤 夏海", "uto51@example.ne.jp", "広報部"],
  ["SH0017", "小島 恭", "kojima_kyousuk@example.co.jp", "営業部"],
  ["SH0018", "牧野 翼", "makino_tsubasa@example.net", "総務部"],
  ["SH0019", "山田　美由紀", "yamada411@example.com", "営業部"]
];
const rowCount = 26;
const letters = "ABCDEFGHIJKLMNOPQRSTUVW".split("");
const cols = document.getElementById("cols");
const head = document.getElementById("letters");
const body = document.getElementById("rows");

letters.forEach((letter, i) => {
  if (i > 3) {
    const col = document.createElement("col");
    if (i < letters.length - 1) col.className = "k-n";
    cols.append(col);
  }
  const th = document.createElement("th");
  th.textContent = letter;
  if (letter === "B") th.className = "sel";
  head.append(th);
});

for (let r = 0; r < rowCount; r++) {
  const tr = body.insertRow();
  const th = document.createElement("th");
  th.textContent = r + 1;
  if (r === 14) th.className = "sel";
  tr.append(th);
  letters.forEach((_, c) => {
    const td = tr.insertCell();
    if (data[r] && c < 4) {
      td.textContent = data[r][c];
      td.className = r === 0 ? "title" : "c" + (c + 1);
      if (r === 14 && c === 1) td.classList.add("edit");
    }
  });
}
```
